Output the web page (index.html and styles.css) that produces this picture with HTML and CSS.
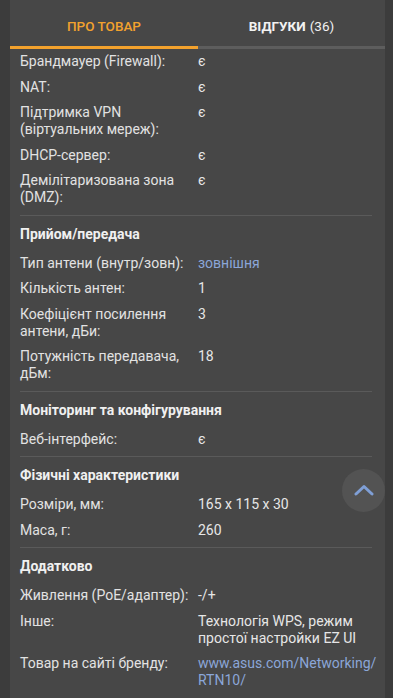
FILE: index.html
```html
<!DOCTYPE html>
<html lang="uk">
<head>
<meta charset="utf-8">
<meta name="viewport" content="width=device-width, initial-scale=1">
<title>Характеристики</title>
<link rel="stylesheet" href="styles.css">
</head>
<body>
<div class="panel">
  <nav class="tabs">
    <div class="tab tab-active">ПРО ТОВАР</div>
    <div class="tab"><b>ВІДГУКИ</b> (36)</div>
  </nav>

  <section class="group">
    <div class="row"><div class="label">Брандмауер (Firewall):</div><div class="value">є</div></div>
    <div class="row"><div class="label">NAT:</div><div class="value">є</div></div>
    <div class="row"><div class="label">Підтримка VPN (віртуальних мереж):</div><div class="value">є</div></div>
    <div class="row"><div class="label">DHCP-сервер:</div><div class="value">є</div></div>
    <div class="row"><div class="label">Демілітаризована зона (DMZ):</div><div class="value">є</div></div>
  </section>

  <section class="group">
    <h3 class="heading">Прийом/передача</h3>
    <div class="row"><div class="label">Тип антени (внутр/зовн):</div><div class="value link">зовнішня</div></div>
    <div class="row"><div class="label">Кількість антен:</div><div class="value">1</div></div>
    <div class="row"><div class="label">Коефіцієнт посилення антени, дБи:</div><div class="value">3</div></div>
    <div class="row"><div class="label">Потужність передавача, дБм:</div><div class="value">18</div></div>
  </section>

  <section class="group">
    <h3 class="heading">Моніторинг та конфігурування</h3>
    <div class="row"><div class="label">Веб-інтерфейс:</div><div class="value">є</div></div>
  </section>

  <section class="group">
    <h3 class="heading">Фізичні характеристики</h3>
    <div class="row"><div class="label">Розміри, мм:</div><div class="value">165 x 115 x 30</div></div>
    <div class="row"><div class="label">Маса, г:</div><div class="value">260</div></div>
  </section>

  <section class="group group-last">
    <h3 class="heading">Додатково</h3>
    <div class="row"><div class="label">Живлення (PoE/адаптер):</div><div class="value">-/+</div></div>
    <div class="row"><div class="label">Інше:</div><div class="value">Технологія WPS, режим простої настройки EZ UI</div></div>
    <div class="row"><div class="label">Товар на сайті бренду:</div><div class="value link">www.asus.com/Networking/<wbr>RTN10/</div></div>
  </section>
</div>

<button class="to-top" aria-label="Вгору">
  <svg width="20" height="12" viewBox="0 0 20 12"><path d="M2 10 L10 2.5 L18 10" fill="none" stroke="#7f9fd6" stroke-width="3" stroke-linecap="round" stroke-linejoin="round"/></svg>
</button>
</body>
</html>
```

FILE: styles.css
```css
* { box-sizing: border-box; }

html, body {
  margin: 0;
  padding: 0;
  background: #3c3c3c;
  font-family: Roboto, "Noto Sans", "Liberation Sans", sans-serif;
  color: #e6e6e6;
}

.panel {
  margin: 0 8px 0 10px;
  background: #474747;
  min-height: 698px;
  padding-bottom: 20px;
}

.tabs {
  display: grid;
  grid-template-columns: 188px 1fr;
}

.tab {
  height: 49px;
  display: flex;
  align-items: center;
  justify-content: center;
  padding-top: 5px;
  font-size: 13.5px;
  font-weight: 400;
  color: #f2f2f2;
  border-bottom: 3px solid #5d5d5d;
}

.tab b { font-weight: 700; margin-right: 4px; }

.tab-active {
  color: #f3a22d;
  font-weight: 500;
  border-bottom-color: #f3a22d;
}

.group {
  margin: 0 13px 0 10px;
  padding-bottom: 4px;
  border-bottom: 1px solid #5a5a5a;
}

.group-last { border-bottom: none; }

.heading {
  margin: 0;
  padding: 10px 0 8px;
  font-size: 14px;
  line-height: 17px;
  font-weight: 700;
  color: #f0f0f0;
}

.row {
  display: grid;
  grid-template-columns: 178px 1fr;
  padding: 4px 0 4.5px;
  font-size: 14px;
  line-height: 17px;
}

.label {
  padding-right: 8px;
  color: #e2e2e2;
}

.value { color: #e6e6e6; }

.link { color: #8ba6d8; }

.to-top {
  position: fixed;
  right: 8px;
  bottom: 186px;
  width: 43px;
  height: 43px;
  border-radius: 50%;
  border: none;
  background: #535353;
  display: flex;
  align-items: center;
  justify-content: center;
  padding: 0 0 2px;
}
```
